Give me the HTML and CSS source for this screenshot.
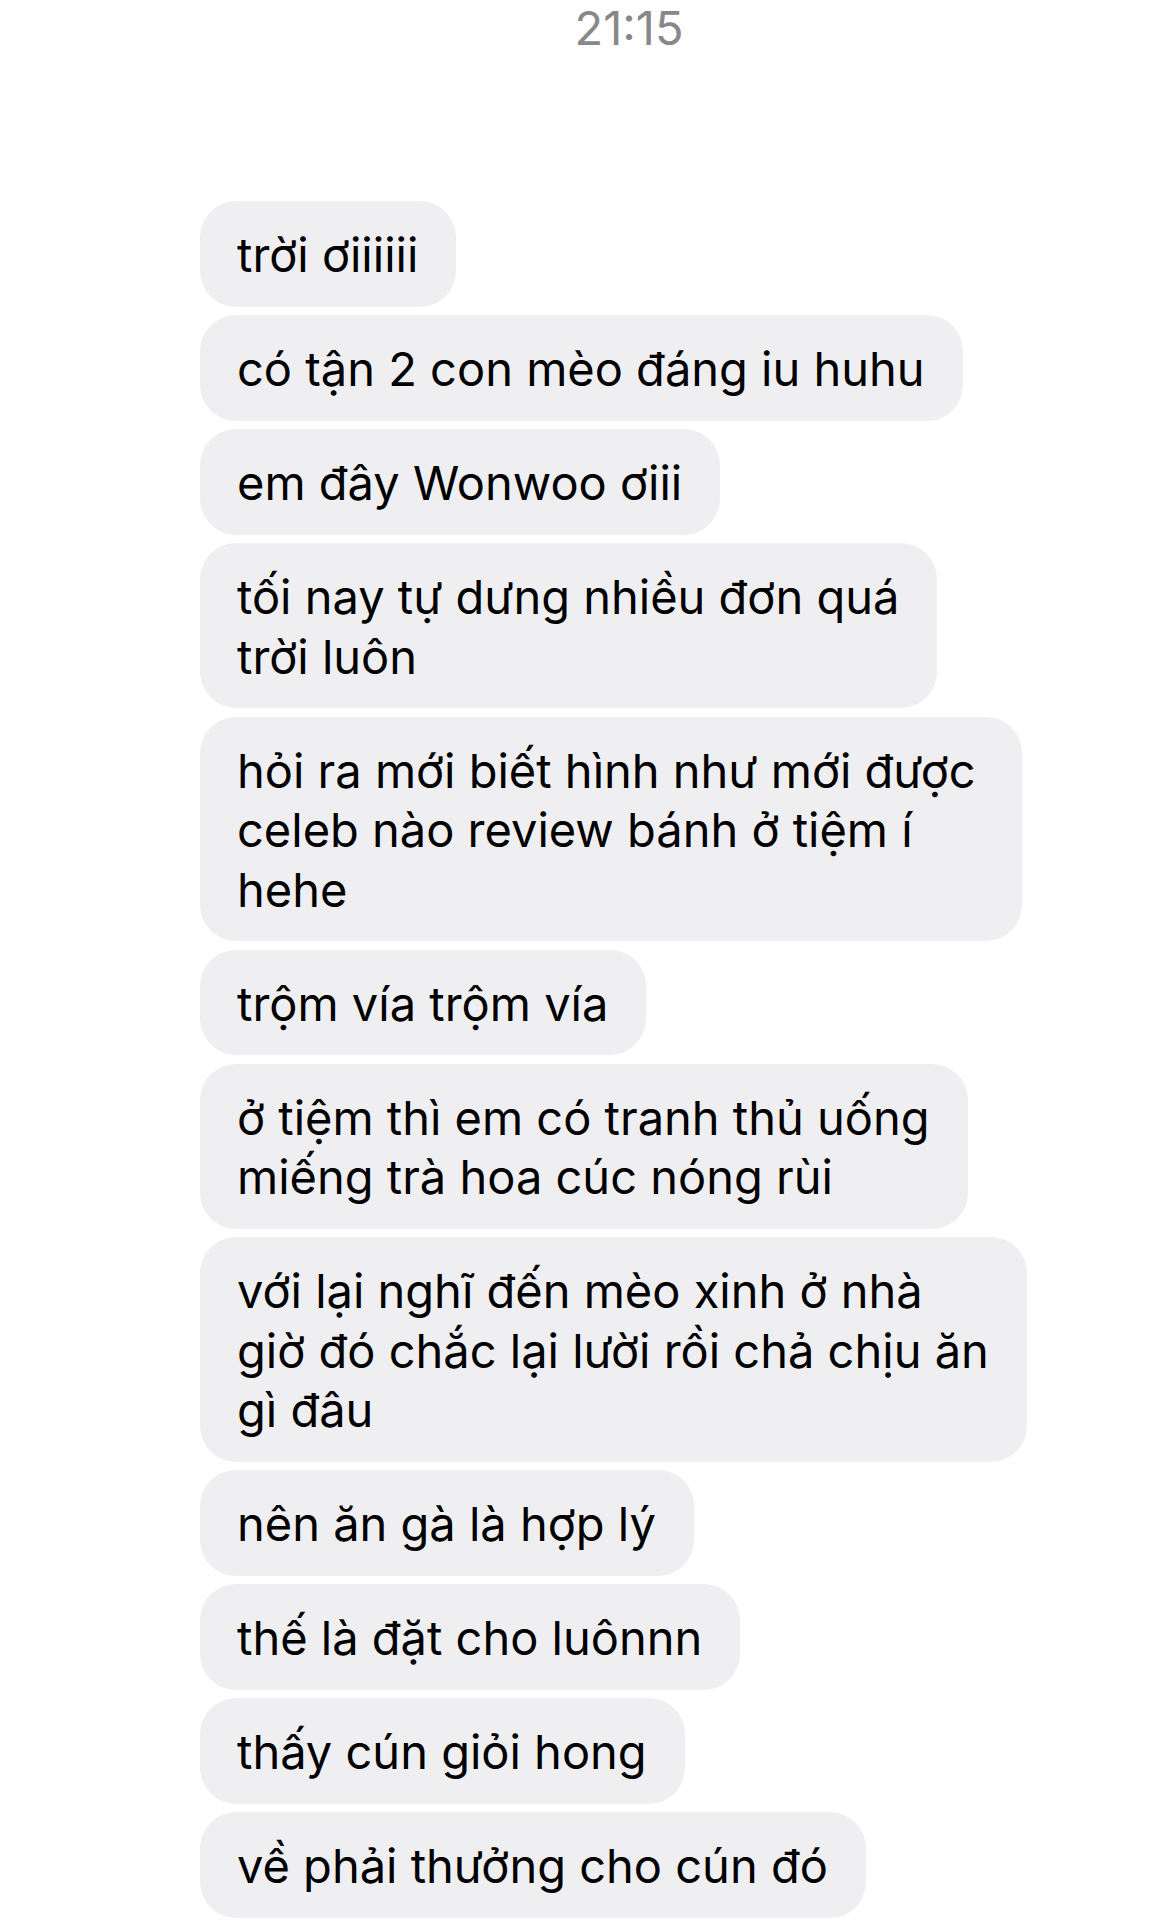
FILE: index.html
```html
<!DOCTYPE html>
<html lang="vi">
<head>
<meta charset="utf-8">
<title>Tin nhắn</title>
<link rel="stylesheet" href="styles.css">
</head>
<body>
<div class="screen">
  <div class="time">21:15</div>
  <div class="thread">
    <div class="bubble">trời ơiiiiii</div>
    <div class="bubble">có tận 2 con mèo đáng iu huhu</div>
    <div class="bubble">em đây Wonwoo ơiii</div>
    <div class="bubble">tối nay tự dưng nhiều đơn quá<br>trời luôn</div>
    <div class="bubble full">hỏi ra mới biết hình như mới được<br>celeb nào review bánh ở tiệm í<br>hehe</div>
    <div class="bubble">trộm vía trộm vía</div>
    <div class="bubble">ở tiệm thì em có tranh thủ uống<br>miếng trà hoa cúc nóng rùi</div>
    <div class="bubble full">với lại nghĩ đến mèo xinh ở nhà<br>giờ đó chắc lại lười rồi chả chịu ăn<br>gì đâu</div>
    <div class="bubble">nên ăn gà là hợp lý</div>
    <div class="bubble">thế là đặt cho luônnn</div>
    <div class="bubble">thấy cún giỏi hong</div>
    <div class="bubble">về phải thưởng cho cún đó</div>
  </div>
</div>
</body>
</html>
```
FILE: styles.css
```css
html, body {
  margin: 0;
  padding: 0;
  background: #ffffff;
}
.screen {
  width: 1169px;
  font-family: Inter, "Noto Sans", "Liberation Sans", sans-serif;
}
.time {
  padding-left: 89px;
  text-align: center;
  font-size: 47px;
  line-height: 56px;
  color: #88888c;
}
.thread {
  margin-top: 145px;
  padding-left: 200px;
  display: flex;
  flex-direction: column;
  align-items: flex-start;
  gap: 8.5px;
}
.bubble {
  box-sizing: border-box;
  padding: 24px 38px 22px 37px;
  background: #efeff2;
  border-radius: 36px;
  color: #000000;
  font-size: 47px;
  line-height: 59.5px;
  white-space: nowrap;
}
.bubble.full {
  min-width: 822px;
}
```
